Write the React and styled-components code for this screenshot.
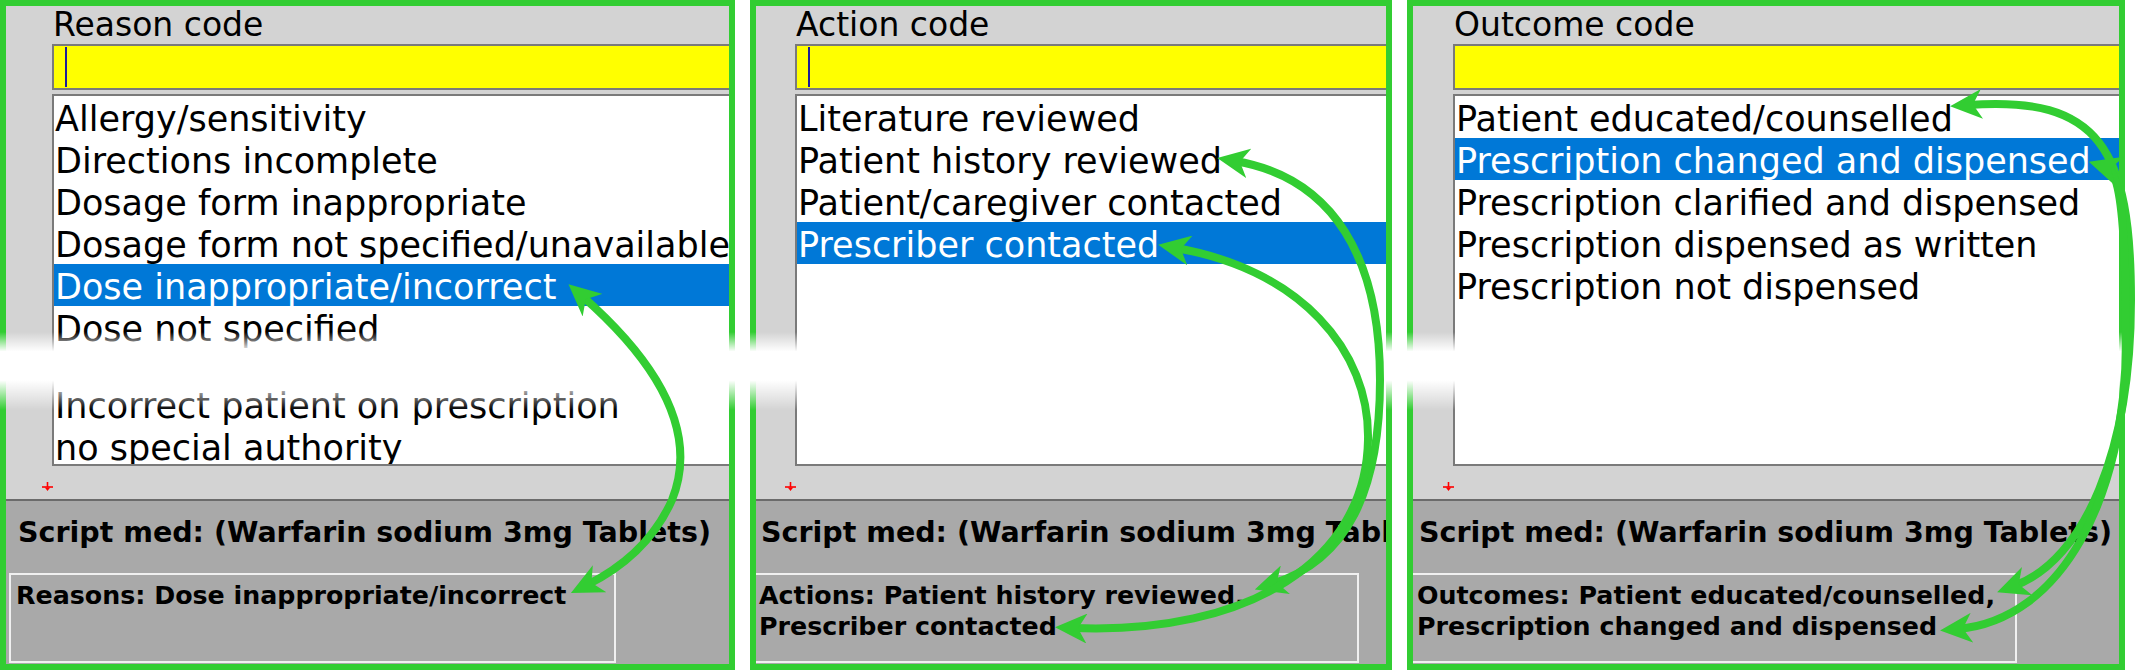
import React from 'react'
import styled, { createGlobalStyle } from 'styled-components'

const GREEN = '#32cd32'

const GlobalStyle = createGlobalStyle`
  html, body {
    margin: 0;
    padding: 0;
    background: #fff;
  }
  body {
    font-family: "DejaVu Sans", Verdana, sans-serif;
    color: #000;
  }
`

const Page = styled.div`
  position: relative;
  width: 2137px;
  height: 670px;
  display: flex;
  gap: 15px;
  background: #fff;
  overflow: hidden;
`

const Panel = styled.section`
  box-sizing: border-box;
  flex-shrink: 0;
  width: ${({ $width }) => $width}px;
  height: 670px;
  border: 6px solid ${GREEN};
  background: #d3d3d3;
  display: flex;
  flex-direction: column;
  overflow: hidden;
`

const Form = styled.div`
  display: flex;
  flex-direction: column;
  padding-left: ${({ $inset }) => $inset}px;
`

const Label = styled.div`
  height: 38px;
  padding-left: 1px;
  font-size: 33px;
  line-height: 38px;
  white-space: nowrap;
`

const CodeInput = styled.div`
  box-sizing: border-box;
  height: 46px;
  margin-right: -40px;
  padding: 1px 0 0 11px;
  border: 2px solid #7a7a7a;
  background: #ffff00;
`

const Caret = styled.span`
  display: block;
  width: 1.5px;
  height: 40px;
  background: #1c1c9a;
`

const CodeList = styled.ul`
  box-sizing: border-box;
  height: 372px;
  margin: 4px -40px 0 0;
  padding: 0;
  list-style: none;
  border: 2px solid #7a7a7a;
  background: #fff;
  overflow: hidden;
`

const Option = styled.li`
  box-sizing: border-box;
  height: 42px;
  padding: 5px 0 0 1px;
  font-size: 35px;
  line-height: 37px;
  white-space: nowrap;
  background: ${({ $selected }) => ($selected ? '#0078d7' : 'transparent')};
  color: ${({ $selected }) => ($selected ? '#fff' : '#000')};
`

// rows lost where the screen capture was cut
const Cut = styled.li`
  height: 35px;
`

const MarkRow = styled.div`
  height: 33px;
  padding-left: ${({ $inset }) => $inset - 10}px;

  svg {
    display: block;
    margin-top: 16px;
  }
`

const Footer = styled.div`
  flex: 1;
  padding-top: 15px;
  border-top: 2px solid #6b6b6b;
  background: #a9a9a9;
`

const ScriptMed = styled.div`
  padding-left: ${({ $inset }) => $inset - 34}px;
  font-size: 28.5px;
  font-weight: bold;
  line-height: 33px;
  white-space: nowrap;
`

const Summary = styled.div`
  box-sizing: border-box;
  flex-shrink: 0;
  width: 607px;
  height: 90px;
  margin: 24px 0 0 ${({ $inset }) => $inset - 43}px;
  padding: 5px 0 0 5px;
  border: 2px solid #f0f0f0;
  font-size: 25.3px;
  font-weight: bold;
  line-height: 31px;
`

const Tear = styled.div`
  position: absolute;
  left: 0;
  right: 0;
  top: 332px;
  height: 78px;
  pointer-events: none;
  background: linear-gradient(
    to bottom,
    rgba(255, 255, 255, 0) 0%,
    #fff 25%,
    #fff 62%,
    rgba(255, 255, 255, 0) 100%
  );
`

const Callouts = styled.svg`
  position: absolute;
  left: 0;
  top: 0;
  width: 2137px;
  height: 670px;
  pointer-events: none;
  overflow: visible;
`

const DropMark = () => (
  <svg width="11" height="9" viewBox="0 0 11 9">
    <path d="M5.5 0 V5" stroke="#f00" strokeWidth="1.6" />
    <path d="M0 5 H11" stroke="#f00" strokeWidth="1.6" />
    <path d="M2.8 5.5 L8.2 5.5 L5.5 9 Z" fill="#f00" />
  </svg>
)

const panels = [
  {
    width: 735,
    inset: 46,
    label: 'Reason code',
    caret: true,
    options: [
      'Allergy/sensitivity',
      'Directions incomplete',
      'Dosage form inappropriate',
      'Dosage form not specified/unavailable',
      'Dose inappropriate/incorrect',
      'Dose not specified',
      null,
      'Incorrect patient on prescription',
      'no special authority',
    ],
    selected: ['Dose inappropriate/incorrect'],
    summary: 'Reasons: Dose inappropriate/incorrect',
  },
  {
    width: 642,
    inset: 39,
    label: 'Action code',
    caret: true,
    options: [
      'Literature reviewed',
      'Patient history reviewed',
      'Patient/caregiver contacted',
      'Prescriber contacted',
    ],
    selected: ['Prescriber contacted'],
    summary: 'Actions: Patient history reviewed, Prescriber contacted',
  },
  {
    width: 718,
    inset: 40,
    label: 'Outcome code',
    caret: false,
    options: [
      'Patient educated/counselled',
      'Prescription changed and dispensed',
      'Prescription clarified and dispensed',
      'Prescription dispensed as written',
      'Prescription not dispensed',
    ],
    selected: ['Prescription changed and dispensed'],
    summary: 'Outcomes: Patient educated/counselled, Prescription changed and dispensed',
  },
]

const links = [
  'M582 296 C655 360, 700 430, 672 500 C652 545, 617 570, 587 585',
  'M1235 161 C1335 178, 1380 260, 1380 380 C1380 490, 1348 560, 1272 584',
  'M1176 248 C1300 270, 1370 350, 1368 440 C1366 560, 1250 635, 1073 628',
  'M1968 105 C2100 95, 2131 150, 2131 300 C2131 450, 2085 560, 2014 586',
  'M2106 167 C2122 172, 2126 240, 2126 340 C2126 500, 2060 620, 1958 629',
]

const CodePanel = ({ width, inset, label, caret, options, selected, summary }) => (
  <Panel $width={width}>
    <Form $inset={inset}>
      <Label>{label}</Label>
      <CodeInput>{caret && <Caret />}</CodeInput>
      <CodeList>
        {options.map((opt, i) =>
          opt === null ? (
            <Cut key={i} />
          ) : (
            <Option key={i} $selected={selected.includes(opt)}>
              {opt}
            </Option>
          )
        )}
      </CodeList>
    </Form>
    <MarkRow $inset={inset}>
      <DropMark />
    </MarkRow>
    <Footer>
      <ScriptMed $inset={inset}>Script med: (Warfarin sodium 3mg Tablets)</ScriptMed>
      <Summary $inset={inset}>{summary}</Summary>
    </Footer>
  </Panel>
)

export default function App() {
  return (
    <>
      <GlobalStyle />
      <Page>
        {panels.map((p) => (
          <CodePanel key={p.label} {...p} />
        ))}
        <Tear />
        <Callouts viewBox="0 0 2137 670">
          <defs>
            <marker
              id="head"
              viewBox="0 0 32 30"
              refX="14"
              refY="15"
              markerWidth="32"
              markerHeight="30"
              markerUnits="userSpaceOnUse"
              orient="auto-start-reverse"
            >
              <path d="M32 15 L0 0 L9 15 L0 30 Z" fill={GREEN} />
            </marker>
          </defs>
          {links.map((d, i) => (
            <path
              key={i}
              d={d}
              fill="none"
              stroke={GREEN}
              strokeWidth="8"
              markerStart="url(#head)"
              markerEnd="url(#head)"
            />
          ))}
        </Callouts>
      </Page>
    </>
  )
}
